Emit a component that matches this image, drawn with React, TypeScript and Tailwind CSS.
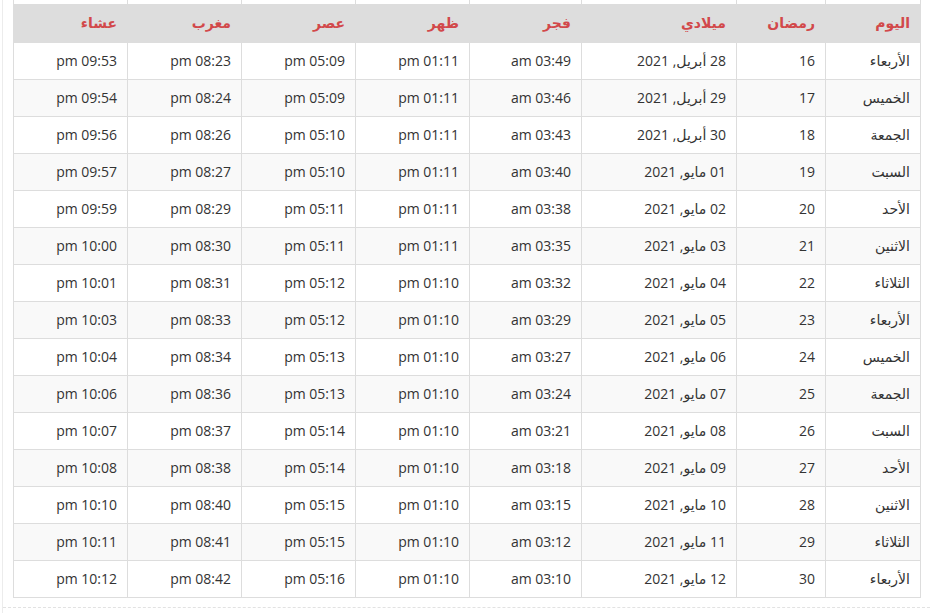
import React from 'react';

type Row = {
  day: string;
  ramadan: number;
  date: string;
  fajr: string;
  dhuhr: string;
  asr: string;
  maghrib: string;
  isha: string;
};

const rows: Row[] = [
  { day: 'الأربعاء', ramadan: 16, date: '28 أبريل, 2021', fajr: '03:49', dhuhr: '01:11', asr: '05:09', maghrib: '08:23', isha: '09:53' },
  { day: 'الخميس', ramadan: 17, date: '29 أبريل, 2021', fajr: '03:46', dhuhr: '01:11', asr: '05:09', maghrib: '08:24', isha: '09:54' },
  { day: 'الجمعة', ramadan: 18, date: '30 أبريل, 2021', fajr: '03:43', dhuhr: '01:11', asr: '05:10', maghrib: '08:26', isha: '09:56' },
  { day: 'السبت', ramadan: 19, date: '01 مايو, 2021', fajr: '03:40', dhuhr: '01:11', asr: '05:10', maghrib: '08:27', isha: '09:57' },
  { day: 'الأحد', ramadan: 20, date: '02 مايو, 2021', fajr: '03:38', dhuhr: '01:11', asr: '05:11', maghrib: '08:29', isha: '09:59' },
  { day: 'الاثنين', ramadan: 21, date: '03 مايو, 2021', fajr: '03:35', dhuhr: '01:11', asr: '05:11', maghrib: '08:30', isha: '10:00' },
  { day: 'الثلاثاء', ramadan: 22, date: '04 مايو, 2021', fajr: '03:32', dhuhr: '01:10', asr: '05:12', maghrib: '08:31', isha: '10:01' },
  { day: 'الأربعاء', ramadan: 23, date: '05 مايو, 2021', fajr: '03:29', dhuhr: '01:10', asr: '05:12', maghrib: '08:33', isha: '10:03' },
  { day: 'الخميس', ramadan: 24, date: '06 مايو, 2021', fajr: '03:27', dhuhr: '01:10', asr: '05:13', maghrib: '08:34', isha: '10:04' },
  { day: 'الجمعة', ramadan: 25, date: '07 مايو, 2021', fajr: '03:24', dhuhr: '01:10', asr: '05:13', maghrib: '08:36', isha: '10:06' },
  { day: 'السبت', ramadan: 26, date: '08 مايو, 2021', fajr: '03:21', dhuhr: '01:10', asr: '05:14', maghrib: '08:37', isha: '10:07' },
  { day: 'الأحد', ramadan: 27, date: '09 مايو, 2021', fajr: '03:18', dhuhr: '01:10', asr: '05:14', maghrib: '08:38', isha: '10:08' },
  { day: 'الاثنين', ramadan: 28, date: '10 مايو, 2021', fajr: '03:15', dhuhr: '01:10', asr: '05:15', maghrib: '08:40', isha: '10:10' },
  { day: 'الثلاثاء', ramadan: 29, date: '11 مايو, 2021', fajr: '03:12', dhuhr: '01:10', asr: '05:15', maghrib: '08:41', isha: '10:11' },
  { day: 'الأربعاء', ramadan: 30, date: '12 مايو, 2021', fajr: '03:10', dhuhr: '01:10', asr: '05:16', maghrib: '08:42', isha: '10:12' },
];

const headers = [
  { label: 'اليوم', w: 'w-[95px]' },
  { label: 'رمضان', w: 'w-[89px]' },
  { label: 'ميلادي', w: 'w-[155px]' },
  { label: 'فجر', w: 'w-[112px]' },
  { label: 'ظهر', w: 'w-[114px]' },
  { label: 'عصر', w: 'w-[114px]' },
  { label: 'مغرب', w: 'w-[114px]' },
  { label: 'عشاء', w: 'w-[114px]' },
];

const cell = 'h-[37px] border border-[#ddd] px-[10px] py-0 text-right align-middle whitespace-nowrap';

export default function App() {
  return (
    <div
      className="min-h-[613px] bg-white text-[14px] text-[#333]"
      style={{ fontFamily: '"Open Sans", "DejaVu Sans", sans-serif' }}
    >
      <div className="ml-[2px] min-h-[613px] border-l border-[#ececec]">
        <div className="pl-[10px]">
          <table dir="rtl" className="w-[908px] table-fixed border-collapse">
            <thead>
              {/* tail of the table above */}
              <tr className="h-[4px]">
                {headers.map((h) => (
                  <td key={h.label} className={`${h.w} h-[4px] border-x border-[#ddd] p-0`} />
                ))}
              </tr>
              <tr className="bg-[#dddddd]">
                {headers.map((h) => (
                  <th
                    key={h.label}
                    className={`${h.w} h-[38px] border-x border-[#ddd] px-[10px] py-0 text-right align-middle font-bold text-[#d2484a]`}
                  >
                    {h.label}
                  </th>
                ))}
              </tr>
            </thead>
            <tbody>
              {rows.map((r, i) => (
                <tr key={r.ramadan} className={i % 2 === 1 ? 'bg-[#f9f9f9]' : 'bg-white'}>
                  <td className={cell}>{r.day}</td>
                  <td className={cell}>{r.ramadan}</td>
                  <td className={cell}>{r.date}</td>
                  <td className={cell}>{r.fajr} am</td>
                  <td className={cell}>{r.dhuhr} pm</td>
                  <td className={cell}>{r.asr} pm</td>
                  <td className={cell}>{r.maghrib} pm</td>
                  <td className={cell}>{r.isha} pm</td>
                </tr>
              ))}
            </tbody>
          </table>
        </div>
        <div className="mt-[9px] border-t border-dashed border-[#e2e2e2]" />
      </div>
    </div>
  );
}
